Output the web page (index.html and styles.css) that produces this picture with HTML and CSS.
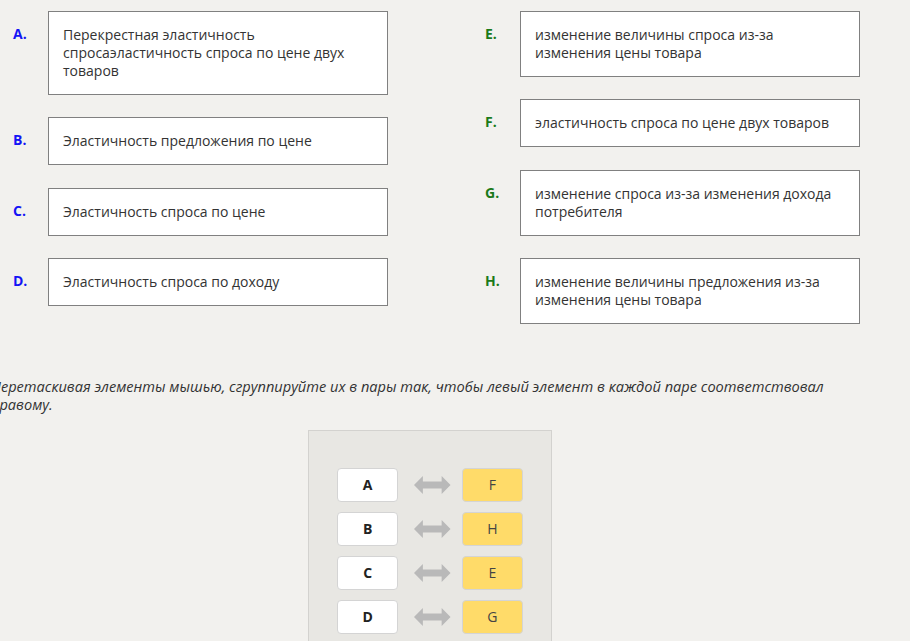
FILE: index.html
```html
<!DOCTYPE html>
<html>
<head>
<meta charset="utf-8">
<link rel="stylesheet" href="styles.css">
</head>
<body>
<div class="columns">
  <div class="col">
    <div class="item"><span class="label left">A.</span><div class="box">Перекрестная эластичность спросаэластичность спроса по цене двух товаров</div></div>
    <div class="item"><span class="label left">B.</span><div class="box">Эластичность предложения по цене</div></div>
    <div class="item"><span class="label left">C.</span><div class="box">Эластичность спроса по цене</div></div>
    <div class="item"><span class="label left">D.</span><div class="box">Эластичность спроса по доходу</div></div>
  </div>
  <div class="col">
    <div class="item"><span class="label right">E.</span><div class="box">изменение величины спроса из-за изменения цены товара</div></div>
    <div class="item"><span class="label right">F.</span><div class="box">эластичность спроса по цене двух товаров</div></div>
    <div class="item"><span class="label right">G.</span><div class="box">изменение спроса из-за изменения дохода потребителя</div></div>
    <div class="item"><span class="label right">H.</span><div class="box">изменение величины предложения из-за изменения цены товара</div></div>
  </div>
</div>
<p class="instr">Перетаскивая элементы мышью, сгруппируйте их в пары так, чтобы левый элемент в каждой паре соответствовал правому.</p>
<div class="pairs">
  <div class="pair"><div class="tile key">A</div><svg class="arrow" viewBox="0 0 37 18"><path d="M0 9 L9 0 L9 5.5 L28 5.5 L28 0 L37 9 L28 18 L28 12.5 L9 12.5 L9 18 Z"/></svg><div class="tile val">F</div></div>
  <div class="pair"><div class="tile key">B</div><svg class="arrow" viewBox="0 0 37 18"><path d="M0 9 L9 0 L9 5.5 L28 5.5 L28 0 L37 9 L28 18 L28 12.5 L9 12.5 L9 18 Z"/></svg><div class="tile val">H</div></div>
  <div class="pair"><div class="tile key">C</div><svg class="arrow" viewBox="0 0 37 18"><path d="M0 9 L9 0 L9 5.5 L28 5.5 L28 0 L37 9 L28 18 L28 12.5 L9 12.5 L9 18 Z"/></svg><div class="tile val">E</div></div>
  <div class="pair"><div class="tile key">D</div><svg class="arrow" viewBox="0 0 37 18"><path d="M0 9 L9 0 L9 5.5 L28 5.5 L28 0 L37 9 L28 18 L28 12.5 L9 12.5 L9 18 Z"/></svg><div class="tile val">G</div></div>
</div>
</body>
</html>
```
FILE: styles.css
```css
html, body {
  margin: 0;
  padding: 0;
  background: #f2f1ee;
  font-family: "Open Sans", "Noto Sans", sans-serif;
  color: #333;
  overflow: hidden;
}
.columns {
  display: flex;
  gap: 97px;
  padding: 11px 0 0 13px;
}
.col {
  display: flex;
  flex-direction: column;
  gap: 22.3px;
}
.item {
  display: flex;
  align-items: flex-start;
}
.label {
  width: 35px;
  flex: none;
  font-weight: bold;
  font-size: 14px;
  line-height: 18px;
  padding-top: 14px;
}
.label.left { color: #1414f5; }
.label.right { color: #1a7a1a; }
.box {
  width: 310px;
  background: #fff;
  border: 1px solid #808080;
  padding: 14px 14px;
  font-size: 14px;
  line-height: 18px;
  color: #333;
}
.instr {
  margin: 53px 0 0 -9px;
  width: 850px;
  font-style: italic;
  font-size: 14.6px;
  line-height: 18.5px;
  color: #333;
}
.pairs {
  margin: 16px 0 0 308px;
  width: 186px;
  background: #e8e7e3;
  border: 1px solid #d3d2cf;
  padding: 37px 28px 40px 28px;
  display: flex;
  flex-direction: column;
  gap: 10px;
}
.pair {
  display: flex;
  align-items: center;
}
.tile {
  width: 60px;
  height: 32px;
  border: 1px solid #d4d4d4;
  border-radius: 4px;
  display: flex;
  align-items: center;
  justify-content: center;
  font-size: 14px;
}
.key {
  background: #fff;
  font-weight: bold;
  color: #222;
}
.val {
  background: #ffdb69;
  color: #444;
}
.arrow {
  width: 37px;
  height: 18px;
  margin: 0 11px 0 16px;
  fill: #b9b9b9;
}
```
